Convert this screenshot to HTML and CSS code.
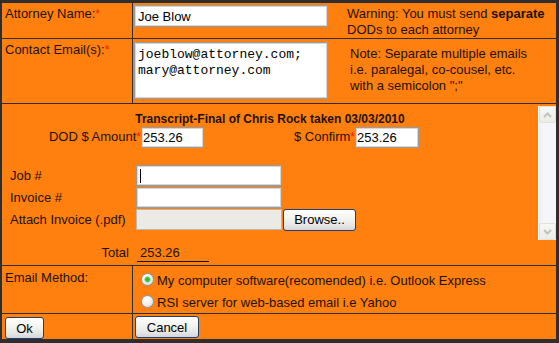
FILE: index.html
```html
<!DOCTYPE html>
<html>
<head>
    <title>DOD</title>
    <link rel="stylesheet" href="styles.css">
</head>
<body>
    <table class="dodForm">
        <colgroup>
            <col class="colLabel">
            <col class="colField">
        </colgroup>
        <tr class="rowName">
            <td class="label">Attorney Name:<span class="req">*</span></td>
            <td class="field">
                <div class="fieldLine">
                    <input type="text" class="textBox" value="Joe Blow">
                    <div class="hint warn">Warning: You must send <b>separate</b><br>DODs to each attorney</div>
                </div>
            </td>
        </tr>
        <tr class="rowEmail">
            <td class="label">Contact Email(s):<span class="req">*</span></td>
            <td class="field">
                <div class="fieldLine">
                    <textarea class="emailBox">joeblow@attorney.com;
mary@attorney.com</textarea>
                    <div class="hint note">Note: Separate multiple emails<br>i.e. paralegal, co-cousel, etc.<br>with a semicolon ";"</div>
                </div>
            </td>
        </tr>
        <tr class="rowJob">
            <td colspan="2" class="jobCell">
                <div class="jobScroll">
                    <div class="jobBody">
                        <div class="jobTitle">Transcript-Final of Chris Rock taken 03/03/2010</div>
                        <div class="amountLine">
                            <span class="amountLabel">DOD $ Amount<span class="req">*</span></span>
                            <input type="text" class="amountBox" value="253.26">
                            <span class="confirmLabel">$ Confirm<span class="req">*</span></span>
                            <input type="text" class="amountBox confirmBox" value="253.26">
                        </div>
                        <div class="jobGrid">
                            <span>Job #</span>
                            <input type="text" class="jobBox caret">
                            <span></span>
                            <span>Invoice #</span>
                            <input type="text" class="jobBox">
                            <span></span>
                            <span>Attach Invoice (.pdf)</span>
                            <input type="text" class="jobBox fileBox" disabled>
                            <button class="xpButton browseBtn">Browse..</button>
                        </div>
                    </div>
                    <div class="scrollBar">
                        <div class="scrollBtn">
                            <svg width="9" height="6" viewBox="0 0 9 6"><path d="M1 5 L4.5 1.5 L8 5" fill="none" stroke="#c2c2ba" stroke-width="2"/></svg>
                        </div>
                        <div class="scrollTrack"></div>
                        <div class="scrollBtn">
                            <svg width="9" height="6" viewBox="0 0 9 6"><path d="M1 1 L4.5 4.5 L8 1" fill="none" stroke="#c2c2ba" stroke-width="2"/></svg>
                        </div>
                    </div>
                </div>
                <div class="totalLine">
                    <span class="totalLabel">Total</span>
                    <span class="totalValue">253.26</span>
                </div>
            </td>
        </tr>
        <tr class="rowMethod">
            <td class="label methodLabel">Email Method:</td>
            <td class="field">
                <label class="radioLine"><input type="radio" name="method" checked><span>My computer software(recomended) i.e. Outlook Express</span></label>
                <label class="radioLine"><input type="radio" name="method"><span>RSI server for web-based email i.e Yahoo</span></label>
            </td>
        </tr>
        <tr class="rowButtons">
            <td class="label"><button class="xpButton okBtn">Ok</button></td>
            <td class="field"><button class="xpButton cancelBtn">Cancel</button></td>
        </tr>
    </table>
</body>
</html>
```

FILE: styles.css
```css
body {
    margin: 0;
    background: #2e2e2e;
    font-family: 'Liberation Sans', Arial, sans-serif;
    font-size: 13px;
    line-height: 16px;
    color: #1e1206;
}

.dodForm {
    margin: 2px 0 0 1px;
    width: 556px;
    table-layout: fixed;
    border-collapse: separate;
    border-spacing: 1px;
    background: #2e2e2e;
}
.colLabel {width: 130px;}
.dodForm td {
    background: #ff7f0f;
    padding: 2px 0 0 1px;
    vertical-align: top;
}
.dodForm td.label {padding: 3px 0 0 3px;}
.dodForm td.methodLabel {padding-top: 4px;}
.dodForm td.jobCell {padding: 2px 0 0 0;}

.rowName {height: 35px;}
.rowEmail {height: 64px;}
.rowJob {height: 161px;}
.rowMethod {height: 47px;}
.rowButtons {height: 25px;}

.req {
    color: #ff1a00;
    font-size: 12px;
}

input, textarea, button {
    font-family: 'Liberation Sans', Arial, sans-serif;
    font-size: 13px;
    margin: 0;
    box-sizing: border-box;
    color: #000;
}
input[type="text"], textarea {
    border: 1px solid #9b9b9b;
    box-shadow: inset 0 0 0 1px #d6d6d6;
    background: #fff;
    outline: none;
}

.fieldLine {
    display: flex;
    align-items: flex-start;
}
.textBox {
    width: 194px;
    height: 22px;
    padding: 0 3px;
}
.emailBox {
    width: 194px;
    height: 57px;
    margin-top: 1px;
    padding: 4px 3px;
    font-family: 'Liberation Mono', 'Courier New', monospace;
    font-size: 13px;
    line-height: 16px;
    resize: none;
    overflow: hidden;
}
.hint {white-space: nowrap;}
.warn {
    margin: 1px 0 0 19px;
}
.note {
    margin: 5px 0 0 22px;
}

/* transcript block */
.jobScroll {
    display: flex;
    height: 134px;
}
.jobBody {
    flex: 1;
    padding-top: 6px;
}
.jobTitle {
    text-align: center;
    font-weight: bold;
    font-size: 12px;
    line-height: 14px;
}
.amountLine {
    display: flex;
    align-items: center;
    height: 22px;
}
.amountLabel {
    width: 139px;
    text-align: right;
}
.confirmLabel {
    width: 151px;
    text-align: right;
}
.amountBox {
    width: 63px;
    height: 21px;
    margin-top: 1px;
    padding: 0 1px;
}
.confirmBox {width: 64px;}
.jobGrid {
    display: grid;
    grid-template-columns: 126px 146px auto;
    grid-auto-rows: 21px;
    row-gap: 1px;
    align-items: center;
    margin-top: 17px;
    padding-left: 8px;
}
.jobBox {
    height: 21px;
    padding: 0 3px;
}
input.jobBox.caret {
    background: #fff linear-gradient(#000, #000) no-repeat 3px 3px / 1px 14px;
}
.dodForm .fileBox {
    background: #ebeae4;
    border-color: #b9b9b4;
    box-shadow: none;
}
.browseBtn {
    width: 73px;
    margin-left: 1px;
}

.scrollBar {
    width: 17px;
    display: flex;
    flex-direction: column;
    background: #f3f3f8;
    border-left: 1px solid #fbfbfd;
}
.scrollTrack {
    flex: 1;
    background: linear-gradient(to right, #eeeef3 0, #f5f5fa 5px, #f5f5fa 100%);
}
.scrollBtn {
    height: 17px;
    display: flex;
    align-items: center;
    justify-content: center;
    box-sizing: border-box;
    border: 1px solid #e2e2dc;
    border-radius: 2px;
    background: linear-gradient(#f8f8f4, #ecece6);
}

.totalLine {
    display: flex;
    margin-top: 5px;
}
.totalLabel {
    width: 125px;
    margin-left: 2px;
    text-align: right;
}
.totalValue {
    width: 72px;
    margin-left: 8px;
    padding-left: 3px;
    box-sizing: border-box;
    border-bottom: 1px solid #1e1206;
}

/* email method */
.radioLine {
    display: flex;
    align-items: flex-start;
    height: 22px;
}
.radioLine span {
    margin: 5px 0 0 3px;
    white-space: nowrap;
}
.radioLine input {
    appearance: none;
    -webkit-appearance: none;
    width: 13px;
    height: 13px;
    margin: 5px 0 0 7px;
    border: 1px solid #8b98a6;
    border-radius: 50%;
    background: radial-gradient(circle at 40% 35%, #ffffff 0, #f2f2ee 45%, #d3d3cc 100%);
    box-sizing: border-box;
}
.radioLine input:checked {
    background: radial-gradient(circle at 50% 50%, #2aa52a 0, #4cc44c 2px, #a8e0a8 3px, rgba(255,255,255,0) 3.6px),
                radial-gradient(circle at 40% 35%, #ffffff 0, #f2f2ee 45%, #d3d3cc 100%);
}

/* buttons */
.xpButton {
    height: 22px;
    padding: 0;
    border: 1px solid #24406a;
    border-radius: 3px;
    background: linear-gradient(#ffffff 0%, #f3f3ef 45%, #e4e4e2 80%, #d3d4e2 100%);
    cursor: pointer;
}
.okBtn {width: 39px;}
.cancelBtn {
    width: 64px;
    margin-left: 1px;
}
```
